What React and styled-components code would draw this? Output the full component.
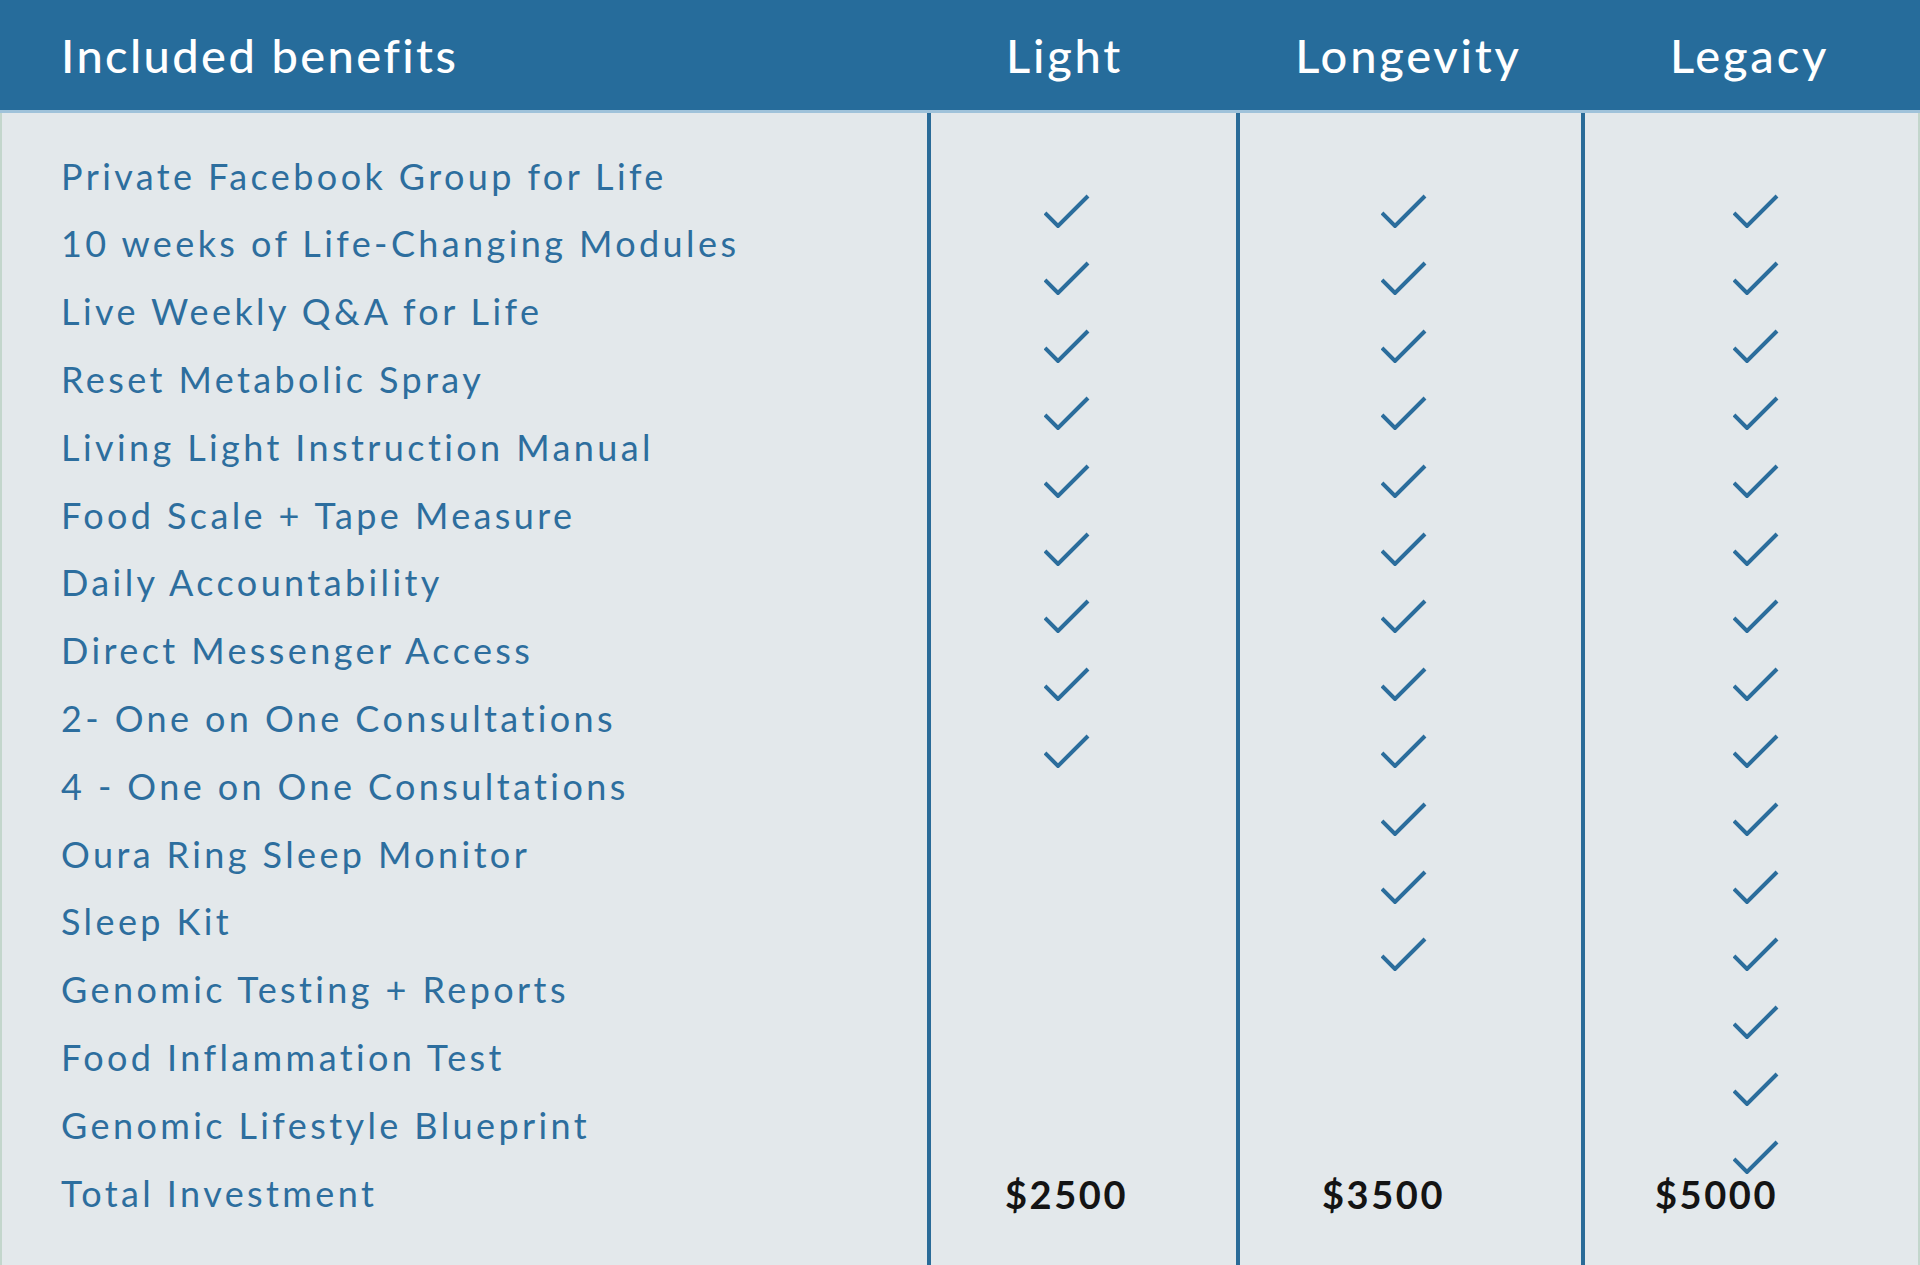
import styled, { createGlobalStyle } from 'styled-components'

const benefits = [
  'Private Facebook Group for Life',
  '10 weeks of Life-Changing Modules',
  'Live Weekly Q&A for Life',
  'Reset Metabolic Spray',
  'Living Light Instruction Manual',
  'Food Scale + Tape Measure',
  'Daily Accountability',
  'Direct Messenger Access',
  '2- One on One Consultations',
  '4 - One on One Consultations',
  'Oura Ring Sleep Monitor',
  'Sleep Kit',
  'Genomic Testing + Reports',
  'Food Inflammation Test',
  'Genomic Lifestyle Blueprint',
]

// shift = how far the column content sits off its centre (negative is left)
const plans = [
  { name: 'Light', checks: 9, price: '$2500', head: -17, check: -17, cost: -17 },
  { name: 'Longevity', checks: 12, price: '$3500', head: 0, check: -7, cost: -27 },
  { name: 'Legacy', checks: 15, price: '$5000', head: 0, check: 4, cost: -35 },
]

const shiftPad = (s) => (s < 0 ? `0 ${-s * 2}px 0 0` : `0 0 0 ${s * 2}px`)

/*---> Check icon <---*/
const Check = () => (
  <svg width='46' height='34' viewBox='0 0 46 34'>
    <polyline
      points='1,19 14,32 44,2'
      fill='none'
      stroke='#2b6d9c'
      strokeWidth='4'
    />
  </svg>
)

/*---> Component <---*/
export default function App() {
  return (
    <>
      <GlobalStyle />
      <Table>
        <Header>
          <HeadTitle>Included benefits</HeadTitle>
          {plans.map((plan) => (
            <HeadPlan key={plan.name} $shift={plan.head}>
              {plan.name}
            </HeadPlan>
          ))}
        </Header>
        <Body>
          <Labels>
            {benefits.map((item) => (
              <Label key={item}>{item}</Label>
            ))}
            <Label>Total Investment</Label>
          </Labels>
          {plans.map((plan) => (
            <PlanColumn key={plan.name}>
              <Checks $shift={plan.check}>
                {Array.from({ length: plan.checks }).map((_, i) => (
                  <CheckCell key={i}>
                    <Check />
                  </CheckCell>
                ))}
              </Checks>
              <Price $shift={plan.cost}>{plan.price}</Price>
            </PlanColumn>
          ))}
        </Body>
      </Table>
    </>
  )
}

/*---> Styles <---*/
const GlobalStyle = createGlobalStyle`
  * {
    box-sizing: border-box;
  }

  body {
    margin: 0;
    background: #e3e8eb;
    font-family: 'Lato', 'Open Sans', sans-serif;
  }
`

const columns = '925px 309px 345px 1fr'

const Table = styled.div`
  width: 1920px;
  height: 1265px;
  display: flex;
  flex-direction: column;
  background: #e3e8eb;
  overflow: hidden;
`

const Header = styled.div`
  height: 114px;
  padding: 0 2px;
  display: grid;
  grid-template-columns: ${columns};
  align-items: center;
  background: #266c9b;
  border-bottom: 3px solid #9fc2da;
  color: #ffffff;
  font-size: 47px;
  font-weight: 500;
  letter-spacing: 2.4px;
`

const HeadTitle = styled.div`
  padding-left: 59px;
`

const HeadPlan = styled.div`
  text-align: center;
  letter-spacing: 2.8px;
  padding: ${(p) => shiftPad(p.$shift)};
`

const Body = styled.div`
  flex: 1;
  display: grid;
  grid-template-columns: ${columns};
  border-left: 2px solid #c3d6cc;
  border-right: 2px solid #c3d6cc;
`

const Labels = styled.div`
  display: flex;
  flex-direction: column;
  padding: 29px 0 0 59px;
`

const Label = styled.div`
  height: 67.8px;
  display: flex;
  align-items: center;
  font-size: 36px;
  letter-spacing: 3.4px;
  color: #2d6e9e;
  white-space: nowrap;
`

const PlanColumn = styled.div`
  display: flex;
  flex-direction: column;
  border-left: 4px solid #2a6b98;
  padding-bottom: 51px;
`

const Checks = styled.div`
  display: flex;
  flex-direction: column;
  align-items: center;
  gap: 33.6px;
  margin-top: 81px;
  padding: ${(p) => shiftPad(p.$shift)};
`

const CheckCell = styled.div`
  height: 34px;
  display: flex;
`

const Price = styled.div`
  margin-top: auto;
  height: 40px;
  line-height: 40px;
  text-align: center;
  padding: ${(p) => shiftPad(p.$shift)};
  font-size: 38px;
  font-weight: 700;
  letter-spacing: 2.6px;
  color: #141414;
`
